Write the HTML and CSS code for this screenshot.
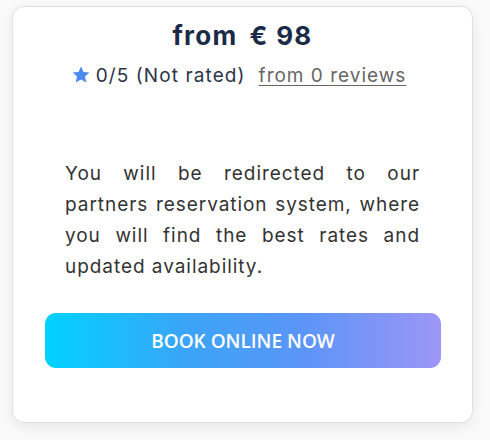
FILE: index.html
```html
<!DOCTYPE html>
<html>
<head>
<meta charset="utf-8">
<link rel="stylesheet" href="styles.css">
</head>
<body>
<div class="card">
  <h2 class="price"><span class="from">from</span><span class="amount">€ 98</span></h2>
  <div class="rating">
    <svg class="star" viewBox="0 0 24 24" width="20" height="20"><path d="M12 1.8l3 6.5 7.1.8-5.3 4.8 1.5 7L12 17.3l-6.3 3.6 1.5-7L1.9 9.1 9 8.3z" fill="#4d8af0"/></svg>
    <span class="score">0/5 (Not rated)</span>
    <a class="reviews" href="#">from 0 reviews</a>
  </div>
  <p class="note">You will be redirected to our partners reservation system, where you will find the best rates and updated availability.</p>
  <a class="book" href="#">BOOK ONLINE NOW</a>
</div>
</body>
</html>
```
FILE: styles.css
```css
html, body {
  margin: 0;
  padding: 0;
  background: #fafafa;
}
body {
  width: 490px;
  height: 440px;
  overflow: hidden;
  font-family: "Inter", "Open Sans", sans-serif;
}
.card {
  box-sizing: border-box;
  margin: 6px 0 0 12px;
  width: 461px;
  height: 417px;
  background: #fff;
  border: 1px solid #e0e0e0;
  border-radius: 12px;
  box-shadow: 0 4px 14px rgba(0, 0, 0, 0.08);
  display: flex;
  flex-direction: column;
  align-items: center;
  padding: 13px 31px 0 31px;
}
.price {
  margin: 0;
  font-size: 26px;
  font-weight: 700;
  letter-spacing: 1.3px;
  color: #1b2a47;
  line-height: 32px;
  display: flex;
  gap: 12px;
}
.rating {
  margin-top: 12px;
  padding-right: 8px;
  display: flex;
  align-items: center;
  font-size: 19px;
  line-height: 24px;
  letter-spacing: 1px;
}
.star {
  margin-right: 5px;
  margin-top: -2px;
}
.score {
  color: #2b3347;
  letter-spacing: 1.1px;
}
.reviews {
  margin-left: 13px;
  color: #666;
  text-decoration: underline;
  text-underline-offset: 3px;
}
.note {
  margin: 70px 0 0 0;
  width: 355px;
  text-align: justify;
  font-size: 19px;
  letter-spacing: 0.95px;
  line-height: 31px;
  color: #333;
}
.book {
  margin-top: 31px;
  align-self: stretch;
  height: 55px;
  border-radius: 11px;
  background: linear-gradient(90deg, #00d2ff 0%, #3aa5f7 35%, #5b95f7 65%, #9d96f7 100%);
  color: #fff;
  font-family: "Open Sans", sans-serif;
  font-weight: 600;
  font-size: 19px;
  display: flex;
  align-items: center;
  justify-content: center;
  text-decoration: none;
  margin-left: 1px;
  margin-right: 0;
}
```
